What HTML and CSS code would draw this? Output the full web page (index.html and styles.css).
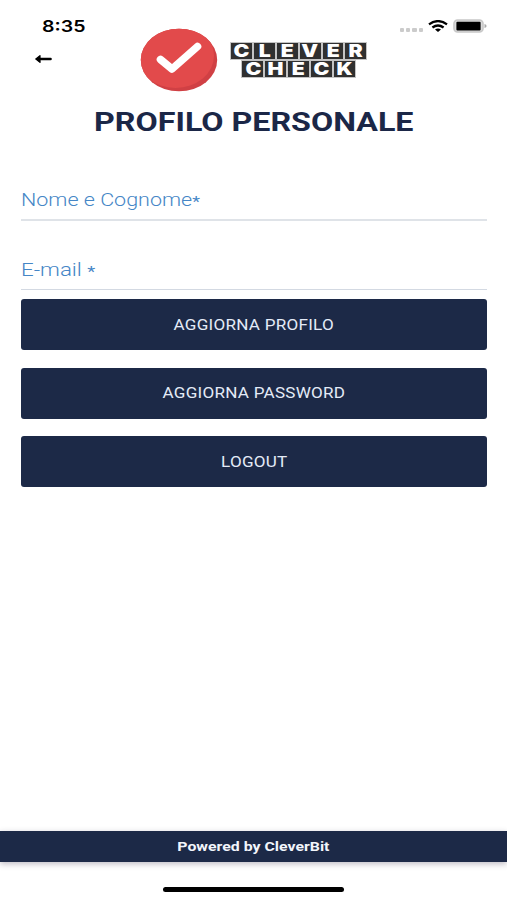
FILE: index.html
```html
<!DOCTYPE html>
<html lang="it">
<head>
    <meta charset="UTF-8">
    <meta name="viewport" content="width=device-width, initial-scale=1.0">
    <title>Clever Check - Profilo personale</title>
    <link rel="stylesheet" href="styles.css">
</head>
<body>
    <header class="header">
        <div class="header-left">
            <span class="time">8:35</span>
            <a class="back" href="#" aria-label="Indietro">
                <svg width="18" height="10" viewBox="0 0 18 10">
                    <path d="M5 5H15.6" stroke="#000" stroke-width="2.4" stroke-linecap="round"/>
                    <path d="M0.8 5L5 1.6V8.4Z" fill="#000" stroke="#000" stroke-width="1.2" stroke-linejoin="round"/>
                </svg>
            </a>
        </div>

        <div class="logo">
            <svg class="logo-check" width="78" height="64" viewBox="0 0 78 64">
                <defs>
                    <clipPath id="disc"><ellipse cx="39" cy="32" rx="38.2" ry="31.3"/></clipPath>
                </defs>
                <ellipse cx="39" cy="32" rx="38.2" ry="31.3" fill="#d04044"/>
                <ellipse cx="35.5" cy="27.5" rx="38.5" ry="32.5" fill="#e24a4b" clip-path="url(#disc)"/>
                <path d="M20.5 31.5L32 41L57.5 18.5" fill="none" stroke="#fff" stroke-width="7.6" stroke-linecap="round" stroke-linejoin="round"/>
            </svg>
            <div class="logo-name">
                <div class="tiles"><i><b>C</b></i><i><b>L</b></i><i><b>E</b></i><i><b>V</b></i><i><b>E</b></i><i><b>R</b></i></div>
                <div class="tiles"><i><b>C</b></i><i><b>H</b></i><i><b>E</b></i><i><b>C</b></i><i><b>K</b></i></div>
            </div>
        </div>

        <div class="header-right">
            <div class="dots"><i></i><i></i><i></i><i></i></div>
            <svg class="wifi" width="20" height="12" viewBox="0 0 20 12">
                <g fill="none" stroke="#000" stroke-width="2.3">
                    <path d="M1 4.4Q10 -2.2 19 4.4"/>
                    <path d="M4.4 7.5Q10 3.4 15.6 7.5"/>
                </g>
                <path d="M7 9.6Q10 7.6 13 9.6L10 12Z"/>
            </svg>
            <svg class="battery" width="34" height="14" viewBox="0 0 34 14">
                <rect x="1" y="1" width="29" height="12" rx="3.5" fill="#ddd" stroke="#c8c8c8" stroke-width="1.6"/>
                <rect x="3.4" y="2.8" width="24.2" height="8.6" rx="1"/>
                <path d="M31.5 5Q33.6 5.4 33.6 7T31.5 9Z" fill="#aaa"/>
            </svg>
        </div>
    </header>

    <h1 class="title"><span>PROFILO PERSONALE</span></h1>

    <form class="form">
        <label class="campo" for="nome"><span>Nome e Cognome<small>*</small></span></label>
        <label class="campo" for="email"><span>E-mail <small>*</small></span></label>

        <button class="btn" type="button"><span>AGGIORNA PROFILO</span></button>
        <button class="btn" type="button"><span>AGGIORNA PASSWORD</span></button>
        <button class="btn" type="button"><span>LOGOUT</span></button>
    </form>

    <footer class="footer"><span>Powered by CleverBit</span></footer>
    <div class="home-bar"></div>
</body>
</html>
```
FILE: styles.css
```css
* {
    margin: 0;
    padding: 0;
    box-sizing: border-box;
}
body {
    height: 900px;
    display: flex;
    flex-direction: column;
    background-color: #fff;
    font-family: Roboto, "Liberation Sans", sans-serif;
    overflow: hidden;
}
/* testo allargato in orizzontale */
.title span,
.campo span,
.btn span,
.footer span,
.time {
    display: inline-block;
    white-space: nowrap;
    transform: scaleX(1.22);
}
.header {
    height: 100px;
    display: grid;
    grid-template-columns: 140px 228px 1fr;
}
.header-left {
    display: flex;
    flex-direction: column;
    align-items: flex-start;
    padding: 16px 0 0 42px;
}
.time {
    font-family: Inter, sans-serif;
    font-size: 16px;
    font-weight: 600;
    line-height: 20px;
    transform-origin: left;
}
.back {
    display: block;
    height: 10px;
    margin: 18px 0 0 -7px;
}
.back svg {
    display: block;
}
.logo {
    display: flex;
    padding-top: 28px;
}
.logo-name {
    margin: 14px 0 0 12px;
    display: flex;
    flex-direction: column;
    align-items: center;
}
.tiles {
    display: flex;
}
.tiles i {
    width: 22.9px;
    height: 18.2px;
    display: flex;
    align-items: center;
    justify-content: center;
    border: 1px solid #c4c4c4;
    background-color: #303030;
    font-style: normal;
    color: #fff;
}
.tiles b {
    font-family: Inter, sans-serif;
    font-size: 17px;
    font-weight: 900;
    line-height: 16px;
    transform: scaleX(1.25);
}
.header-right {
    display: flex;
    align-items: flex-start;
    padding: 19px 0 0 32px;
}
.dots {
    display: flex;
    gap: 2px;
    margin-top: 9px;
}
.dots i {
    width: 4.2px;
    height: 4px;
    border-radius: 1px;
    background-color: #cbcbcb;
}
.wifi {
    margin: 1px 0 0 5px;
}
.battery {
    margin-left: 5px;
}
.title {
    height: 44px;
    text-align: center;
    font-size: 26px;
    font-weight: 700;
    line-height: 45px;
    color: #1b2747;
}
.title span {
    transform: scaleX(1.24);
}
.form {
    display: flex;
    flex-direction: column;
    padding: 33px 20px 0 21px;
}
.campo {
    height: 44px;
    margin-bottom: 25px;
    border-bottom: 2px solid #dfe3e8;
    font-size: 18px;
    font-weight: 300;
    line-height: 46px;
    color: #4586c6;
}
.campo + .campo {
    margin-bottom: 9px;
    border-bottom: 1px solid #d3d9e2;
    line-height: 47px;
}
.campo span {
    transform: scaleX(1.195);
    transform-origin: left;
}
.campo + .campo span {
    transform: scaleX(1.24);
}
.campo small {
    position: relative;
    top: 1px;
    font-size: 15px;
    font-weight: 400;
    line-height: 1;
}
.btn {
    height: 51px;
    margin-bottom: 17.5px;
    border: none;
    border-radius: 3px;
    background-color: #1c2947;
    color: #e4ebf7;
    font-family: inherit;
    font-size: 14px;
    font-weight: 400;
}
.btn span {
    letter-spacing: 0.2px;
}
.footer {
    height: 31px;
    margin-top: auto;
    background-color: #1c2947;
    box-shadow: 0 2px 6px rgba(40, 30, 60, 0.3);
    text-align: center;
    font-size: 13px;
    font-weight: 700;
    line-height: 31px;
    color: #f2f5fb;
}
.home-bar {
    flex-shrink: 0;
    width: 181px;
    height: 5px;
    margin: 25px auto 8px 163px;
    border-radius: 3px;
    background-color: #000;
}
```
